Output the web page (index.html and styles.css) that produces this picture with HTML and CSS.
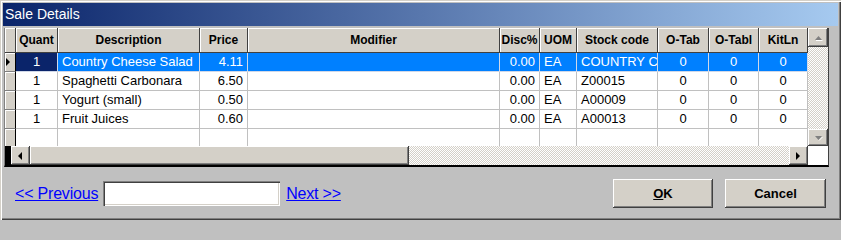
FILE: index.html
```html
<!DOCTYPE html>
<html>
<head>
<meta charset="utf-8">
<link rel="stylesheet" href="styles.css">
</head>
<body>
<div class="window">
  <div class="titlebar">Sale Details</div>
  <div class="grid">
    <div class="grid-main">
      <div class="data">
        <div class="row head">
          <div class="c ind"></div>
          <div class="c">Quant</div>
          <div class="c">Description</div>
          <div class="c">Price</div>
          <div class="c">Modifier</div>
          <div class="c">Disc%</div>
          <div class="c">UOM</div>
          <div class="c">Stock code</div>
          <div class="c">O-Tab</div>
          <div class="c">O-Tabl</div>
          <div class="c">KitLn</div>
        </div>
        <div class="row sel">
          <div class="c ind"><svg width="5" height="8" viewBox="0 0 5 8"><polygon points="0,0 4,4 0,8" fill="#000"/></svg></div>
          <div class="c ctr focus">1</div>
          <div class="c lft">Country Cheese Salad</div>
          <div class="c rgt">4.11</div>
          <div class="c"></div>
          <div class="c rgt">0.00</div>
          <div class="c lft">EA</div>
          <div class="c lft">COUNTRY CI</div>
          <div class="c ctr">0</div>
          <div class="c ctr">0</div>
          <div class="c ctr">0</div>
        </div>
        <div class="row">
          <div class="c ind"></div>
          <div class="c ctr">1</div>
          <div class="c lft">Spaghetti Carbonara</div>
          <div class="c rgt">6.50</div>
          <div class="c"></div>
          <div class="c rgt">0.00</div>
          <div class="c lft">EA</div>
          <div class="c lft">Z00015</div>
          <div class="c ctr">0</div>
          <div class="c ctr">0</div>
          <div class="c ctr">0</div>
        </div>
        <div class="row">
          <div class="c ind"></div>
          <div class="c ctr">1</div>
          <div class="c lft">Yogurt (small)</div>
          <div class="c rgt">0.50</div>
          <div class="c"></div>
          <div class="c rgt">0.00</div>
          <div class="c lft">EA</div>
          <div class="c lft">A00009</div>
          <div class="c ctr">0</div>
          <div class="c ctr">0</div>
          <div class="c ctr">0</div>
        </div>
        <div class="row">
          <div class="c ind"></div>
          <div class="c ctr">1</div>
          <div class="c lft">Fruit Juices</div>
          <div class="c rgt">0.60</div>
          <div class="c"></div>
          <div class="c rgt">0.00</div>
          <div class="c lft">EA</div>
          <div class="c lft">A00013</div>
          <div class="c ctr">0</div>
          <div class="c ctr">0</div>
          <div class="c ctr">0</div>
        </div>
        <div class="row">
          <div class="c ind"></div>
          <div class="c"></div>
          <div class="c"></div>
          <div class="c"></div>
          <div class="c"></div>
          <div class="c"></div>
          <div class="c"></div>
          <div class="c"></div>
          <div class="c"></div>
          <div class="c"></div>
          <div class="c"></div>
        </div>
      </div>
      <div class="vscroll">
        <div class="sbtn vup"><svg width="9" height="6" viewBox="0 0 9 6"><polygon points="1,5 4.5,1 8,5" fill="#808080"/><line x1="2" y1="5.5" x2="8.5" y2="5.5" stroke="#fff" stroke-width="1"/></svg></div>
        <div class="track vtrack"></div>
        <div class="sbtn vdown"><svg width="9" height="6" viewBox="0 0 9 6"><polygon points="1,1 8,1 4.5,5" fill="#808080"/><line x1="5" y1="5.5" x2="8.5" y2="2" stroke="#fff" stroke-width="1"/></svg></div>
      </div>
    </div>
    <div class="hscroll">
      <div class="hblack"></div>
      <div class="sbtn hbtn"><svg width="5" height="8" viewBox="0 0 5 8"><polygon points="4,0 0,4 4,8" fill="#000"/></svg></div>
      <div class="sbtn thumb"></div>
      <div class="track htrack"></div>
      <div class="sbtn hbtn"><svg width="5" height="8" viewBox="0 0 5 8"><polygon points="0,0 4,4 0,8" fill="#000"/></svg></div>
      <div class="corner"></div>
    </div>
  </div>
  <div class="footer">
    <div class="nav">
      <a class="link" href="#">&lt;&lt; Previous</a>
      <input class="pagebox" type="text">
      <a class="link" href="#">Next &gt;&gt;</a>
    </div>
    <div class="actions">
      <button class="btn ok"><u>O</u>K</button>
      <button class="btn cancel">Cancel</button>
    </div>
  </div>
</div>
</body>
</html>
```

FILE: styles.css
```css
* { box-sizing: border-box; }
html, body { margin: 0; padding: 0; }
body {
  width: 841px;
  height: 220px;
  overflow: hidden;
  font-family: "Liberation Sans", Arial, sans-serif;
  background: #c0c0c0;
}
.window {
  width: 841px;
  height: 220px;
  padding: 3px;
  background: #c0c0c0;
  box-shadow: inset 1px 1px #d4d0c8, inset 2px 2px #fff, inset -1px -1px #404040, inset -2px -2px #808080;
  display: flex;
  flex-direction: column;
}
.titlebar {
  height: 23px;
  line-height: 23px;
  padding-left: 2px;
  color: #fff;
  font-size: 14px;
  background: linear-gradient(to right, #0a246a, #a6caf0);
}
.grid {
  margin: 2px 0 0 1px;
  width: 825px;
  height: 139px;
  flex: none;
  border-left: 1px solid #808080;
  border-right: 1px solid #404040;
  border-bottom: 2px solid #000;
  display: flex;
  flex-direction: column;
  background: #fff;
}
.grid-main {
  display: flex;
  height: 118px;
  flex: none;
}
.data {
  width: 803px;
  height: 118px;
  overflow: hidden;
  background: #fff;
}
.row {
  display: grid;
  grid-template-columns: 11px 42px 142px 48px 252px 40px 37px 81px 51px 50px 49px;
  height: 19px;
  font-size: 13px;
  color: #000;
}
.row .c {
  border-right: 1px solid #c0c0c0;
  border-bottom: 1px solid #c0c0c0;
  line-height: 18px;
  white-space: nowrap;
  overflow: hidden;
}
.row .ind {
  background: #d4d0c8;
  border-right: 1px solid #000;
  border-bottom: 1px solid #808080;
  box-shadow: inset 1px 1px #fff;
  display: flex;
  align-items: center;
  padding-left: 1px;
}
.row .ind svg { display: block; }
.head {
  height: 25px;
  font-size: 12px;
  font-weight: bold;
}
.head .c {
  background: #d4d0c8;
  border-right: 1px solid #404040;
  border-bottom: 1px solid #404040;
  box-shadow: inset 1px 1px #fff;
  line-height: 24px;
  text-align: center;
}
.lft { padding-left: 4px; }
.rgt { text-align: right; padding-right: 4px; }
.ctr { text-align: center; }
.sel .c { background: #0080ff; color: #fff; border-right-color: #d0d8e8; border-bottom-color: #d0d8e8; }
.sel .c.ind { background: #d4d0c8; border-right-color: #000; border-bottom-color: #808080; }
.sel .c.focus { background: #0a246a; }
.vscroll {
  width: 20px;
  display: flex;
  flex-direction: column;
}
.sbtn {
  background: #d4d0c8;
  box-shadow: inset -1px -1px #404040, inset 1px 1px #fff, inset -2px -2px #808080;
  display: flex;
  align-items: center;
  justify-content: center;
}
.sbtn svg { display: block; }
.vup { height: 19px; }
.vdown { height: 17px; }
.track {
  background: repeating-conic-gradient(#ffffff 0 25%, #d4d0c8 0 50%) 0 0 / 2px 2px;
}
.vtrack { flex: 1; }
.hscroll {
  display: flex;
  height: 19px;
  flex: none;
}
.hblack { width: 6px; background: #000; }
.hbtn { width: 19px; }
.thumb { width: 379px; }
.htrack { width: 380px; }
.corner { width: 20px; background: #fff; }
.footer {
  display: flex;
  justify-content: space-between;
  align-items: flex-start;
  padding: 12px 12px 0 12px;
  flex: 1;
}
.nav {
  display: flex;
  align-items: center;
  height: 29px;
}
.link {
  color: #0000ff;
  text-decoration: underline;
  font-size: 16px;
  letter-spacing: -0.2px;
}
.pagebox {
  width: 177px;
  height: 25px;
  margin: 0 6px 0 5px;
  border: 0;
  background: #fff;
  box-shadow: inset 1px 1px #808080, inset 2px 2px #404040, inset -1px -1px #fff, inset -2px -2px #d4d0c8;
  font-family: inherit;
  outline: none;
}
.actions {
  display: flex;
  gap: 12px;
}
.btn {
  height: 29px;
  border: 0;
  background: #d4d0c8;
  box-shadow: inset -1px -1px #404040, inset 1px 1px #fff, inset -2px -2px #808080;
  font-family: inherit;
  font-size: 13px;
  font-weight: bold;
  color: #000;
  padding: 0;
}
.ok { width: 100px; }
.cancel { width: 101px; }
```
